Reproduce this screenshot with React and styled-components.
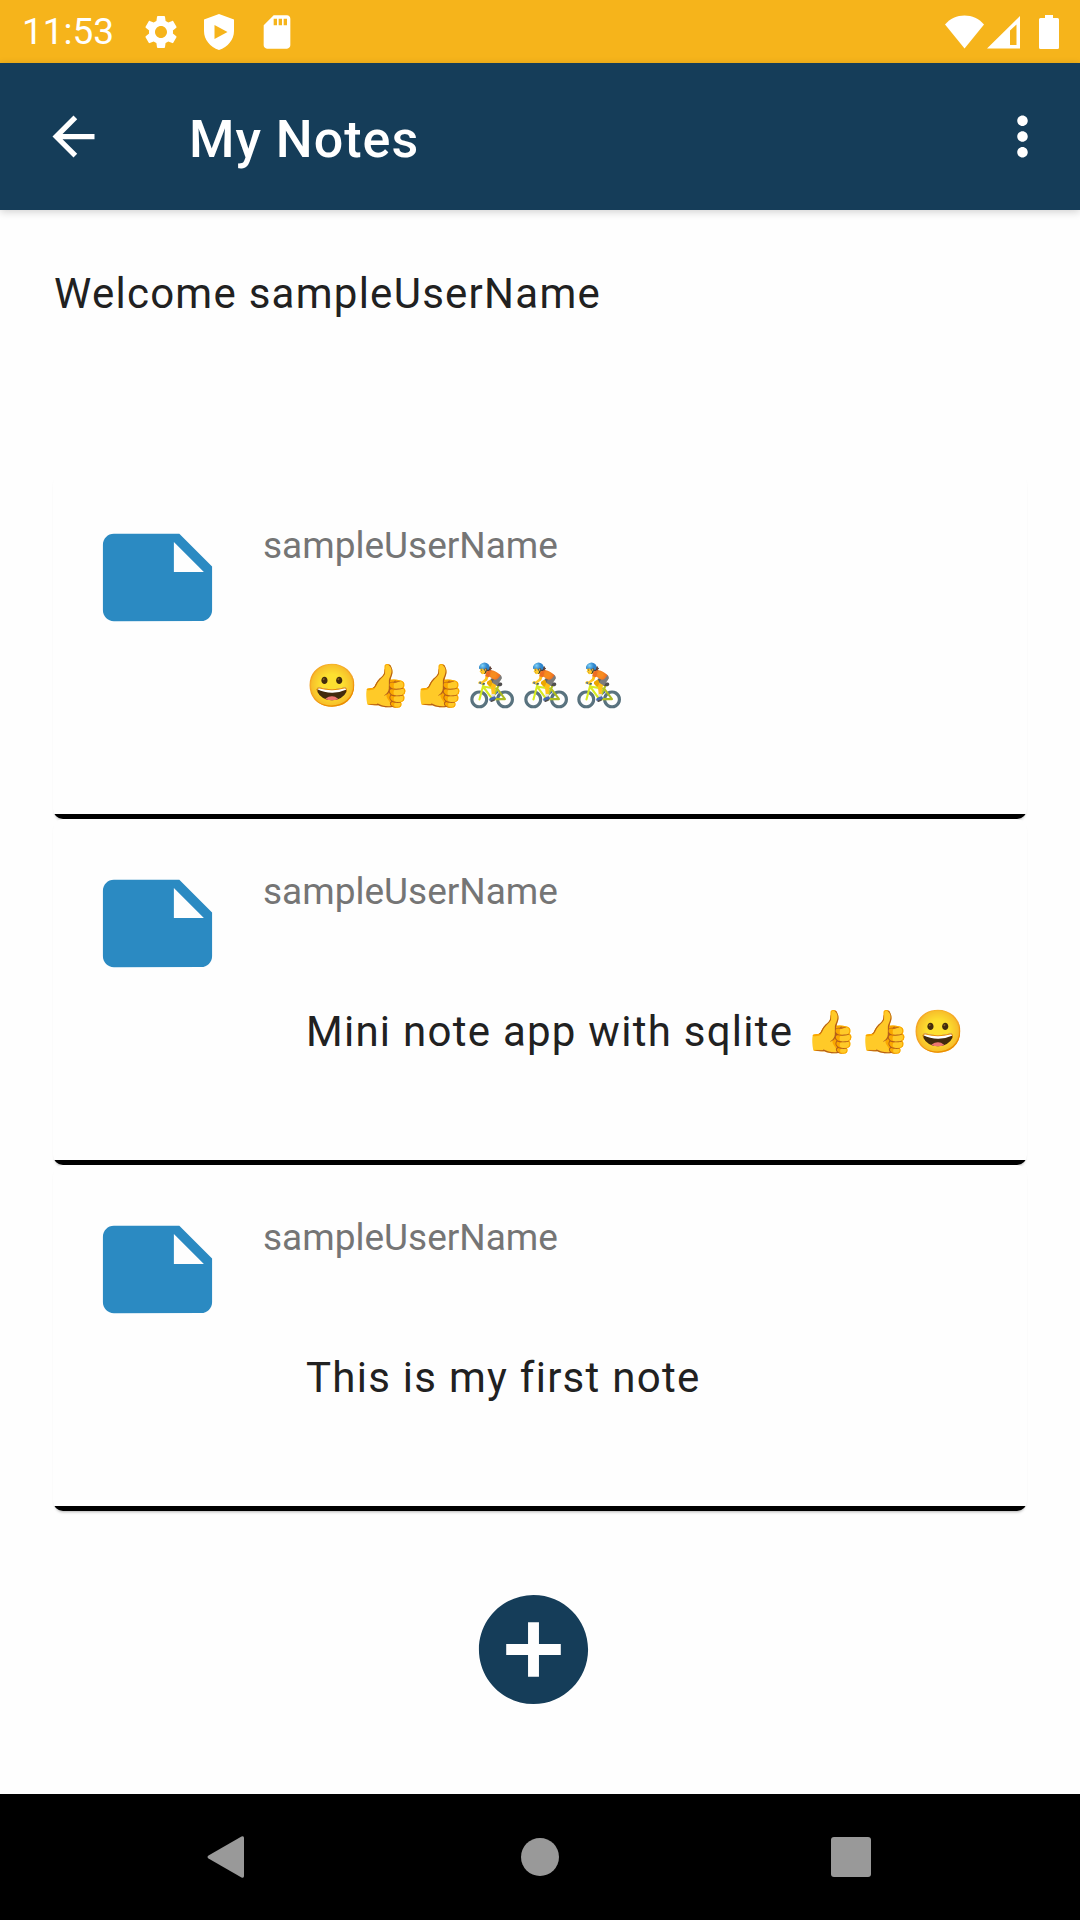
import React from 'react';
import styled, { createGlobalStyle } from 'styled-components';

const GlobalStyle = createGlobalStyle`
  * { box-sizing: border-box; }
  body {
    margin: 0;
    background: #fefefe;
    color: #212121;
    font-family: Roboto, 'Noto Sans', 'Noto Color Emoji', sans-serif;
  }
`;

const Screen = styled.div`
  display: flex;
  flex-direction: column;
  min-height: 100vh;
`;

const StatusBar = styled.div`
  display: flex;
  align-items: center;
  justify-content: space-between;
  height: 63px;
  padding: 0 21px 0 22px;
  background: #f6b41b;
  color: #fff;
`;

const StatusGroup = styled.div`
  display: flex;
  align-items: center;
  gap: ${(p) => p.$gap}px;
`;

const Clock = styled.time`
  margin-right: 9px;
  font-size: 37px;
  line-height: 44px;
`;

const Glyph = styled.svg`
  display: block;
  flex: none;
  fill: currentColor;
`;

const AppBar = styled.header`
  display: flex;
  align-items: center;
  z-index: 1;
  height: 147px;
  padding: 0 26px 0 42px;
  background: #153d59;
  color: #fff;
  box-shadow: 0 2px 8px rgba(0, 0, 0, 0.18);
`;

const IconButton = styled.button`
  display: flex;
  align-items: center;
  justify-content: center;
  padding: 0;
  border: 0;
  background: none;
  color: inherit;
  cursor: pointer;
`;

const Title = styled.h1`
  flex: 1;
  margin: 6px 0 0 84px;
  font-size: 52px;
  font-weight: 500;
  line-height: 62px;
  letter-spacing: 1px;
`;

const Main = styled.main`
  display: flex;
  flex: 1;
  flex-direction: column;
  padding: 59px 53px 79px;
`;

const BodyText = styled.p`
  margin: 0 0 0 1px;
  font-size: 42px;
  line-height: 50px;
  letter-spacing: 0.03em;
`;

const NoteList = styled.ul`
  margin: 154px 0 73px;
  padding: 0;
  list-style: none;
`;

const NoteCard = styled.li`
  display: flex;
  gap: 40px;
  padding: 39px 39px 108px;
  border-radius: 10px;
  background: linear-gradient(#000, #000) bottom / 100% 5px no-repeat #fefefe;
  box-shadow: 0 3px 3px -2px rgba(0, 0, 0, 0.3);
`;

const NoteContent = styled.div`
  flex: 1;
  padding-top: 12px;
`;

const Author = styled.p`
  margin: 0 0 93px;
  color: #757575;
  font-size: 37px;
  line-height: 44px;
`;

const NoteText = styled(BodyText)`
  margin-left: 43px;
`;

const AddButton = styled(IconButton)`
  align-self: center;
  margin-right: 13px;
  color: #153d59;
`;

const NavBar = styled.nav`
  display: flex;
  align-items: center;
  justify-content: center;
  height: 126px;
  background: #000;
  color: #999;
`;

const NavButton = styled(IconButton)`
  flex: 0 1 311px;
  height: 100%;
`;

const notes = [
  { id: 3, author: 'sampleUserName', text: '😀👍👍🚴🚴🚴' },
  { id: 2, author: 'sampleUserName', text: 'Mini note app with sqlite 👍👍😀' },
  { id: 1, author: 'sampleUserName', text: 'This is my first note' },
];

function Icon({ w, h = w, box = '0 0 24 24', children }) {
  return (
    <Glyph width={w} height={h} viewBox={box} aria-hidden="true">
      {children}
    </Glyph>
  );
}

export default function App() {
  return (
    <Screen>
      <GlobalStyle />
      <StatusBar>
        <StatusGroup $gap={18}>
          <Clock>11:53</Clock>
          <Icon w={40}>
            <path d="M19.14 12.94c.04-.3.06-.61.06-.94 0-.32-.02-.64-.07-.94l2.03-1.58c.18-.14.23-.41.12-.61l-1.92-3.32c-.12-.22-.37-.29-.59-.22l-2.39.96c-.5-.38-1.03-.7-1.62-.94l-.36-2.54c-.04-.24-.24-.41-.48-.41h-3.84c-.24 0-.43.17-.47.41l-.36 2.54c-.59.24-1.13.57-1.62.94l-2.39-.96c-.22-.08-.47 0-.59.22L2.74 8.87c-.12.21-.08.47.12.61l2.03 1.58c-.05.3-.09.63-.09.94s.02.64.07.94l-2.03 1.58c-.18.14-.23.41-.12.61l1.92 3.32c.12.22.37.29.59.22l2.39-.96c.5.38 1.03.7 1.62.94l.36 2.54c.05.24.24.41.48.41h3.84c.24 0 .44-.17.47-.41l.36-2.54c.59-.24 1.13-.56 1.62-.94l2.39.96c.22.08.47 0 .59-.22l1.92-3.32c.12-.22.07-.47-.12-.61l-2.01-1.58zM12 15.6c-1.98 0-3.6-1.62-3.6-3.6s1.62-3.6 3.6-3.6 3.6 1.62 3.6 3.6-1.62 3.6-3.6 3.6z" />
          </Icon>
          <Icon w={40} box="0 0 40 40">
            <path
              fillRule="evenodd"
              d="M20 2 5 7.500V19c0 8.500 6 16 15 19 9-3 15-10.500 15-19V7.500zM15.500 13v14L28.500 20z"
            />
          </Icon>
          <Icon w={40}>
            <path d="M18 2h-8L4.020 8 4 20c0 1.100.9 2 2 2h12c1.100 0 2-.9 2-2V4c0-1.100-.9-2-2-2zm-6 6h-2V4h2v4zm3 0h-2V4h2v4zm3 0h-2V4h2v4z" />
          </Icon>
        </StatusGroup>
        <StatusGroup $gap={19}>
          <StatusGroup $gap={3}>
            <Icon w={39} h={34} box="0 0 39 34">
              <path d="M19.500 33.500 0 9.500C5 3.500 12 .5 19.500 .5S34 3.500 39 9.500z" />
            </Icon>
            <Icon w={33} h={34} box="0 0 33 34">
              <path fillRule="evenodd" d="M33 1v32.500H0zM29.500 9.500 23 15.500v14.500h6.500z" />
            </Icon>
          </StatusGroup>
          <Icon w={20} h={34} box="0 0 20 34">
            <path d="M6 0h8v3h4.500q1.500 0 1.500 1.500v28q0 1.500-1.500 1.500h-17Q0 34 0 32.500v-28Q0 3 1.500 3H6z" />
          </Icon>
        </StatusGroup>
      </StatusBar>
      <AppBar>
        <IconButton type="button" aria-label="Back">
          <Icon w={63}>
            <path d="M20 11H7.830l5.590-5.590L12 4l-8 8 8 8 1.410-1.410L7.830 13H20v-2z" />
          </Icon>
        </IconButton>
        <Title>My Notes</Title>
        <IconButton type="button" aria-label="More options">
          <Icon w={63}>
            <path d="M12 8c1.100 0 2-.9 2-2s-.9-2-2-2-2 .9-2 2 .9 2 2 2zm0 2c-1.100 0-2 .9-2 2s.9 2 2 2 2-.9 2-2-.9-2-2-2zm0 6c-1.100 0-2 .9-2 2s.9 2 2 2 2-.9 2-2-.9-2-2-2z" />
          </Icon>
        </IconButton>
      </AppBar>
      <Main>
        <BodyText>Welcome sampleUserName</BodyText>
        <NoteList>
          {notes.map((note) => (
            <NoteCard key={note.id}>
              <Icon w={131}>
                <path
                  fill="#2b8ac2"
                  d="M22 10l-6-6H4c-1.100 0-2 .9-2 2v12.010c0 1.100.9 1.990 2 1.990l16-.01c1.100 0 2-.89 2-1.990v-8zM15 5.500l5.500 5.500H15V5.500z"
                />
              </Icon>
              <NoteContent>
                <Author>{note.author}</Author>
                <NoteText>{note.text}</NoteText>
              </NoteContent>
            </NoteCard>
          ))}
        </NoteList>
        <AddButton type="button" aria-label="Add note">
          <Icon w={131}>
            <path d="M12 2C6.480 2 2 6.480 2 12s4.480 10 10 10 10-4.480 10-10S17.520 2 12 2zm5 11h-4v4h-2v-4H7v-2h4V7h2v4h4v2z" />
          </Icon>
        </AddButton>
      </Main>
      <NavBar>
        <NavButton type="button" aria-label="Back">
          <Icon w={44} box="0 0 44 44">
            <path d="M1.500 20.500 34.500 1.500Q37 .5 37 3v38q0 2.500-2.500 1.500L1.500 23.500Q-.5 22 1.500 20.500z" />
          </Icon>
        </NavButton>
        <NavButton type="button" aria-label="Home">
          <Icon w={40} box="0 0 40 40">
            <circle cx="20" cy="20" r="19" />
          </Icon>
        </NavButton>
        <NavButton type="button" aria-label="Recent apps">
          <Icon w={40} box="0 0 40 40">
            <rect width="40" height="40" rx="3" />
          </Icon>
        </NavButton>
      </NavBar>
    </Screen>
  );
}
